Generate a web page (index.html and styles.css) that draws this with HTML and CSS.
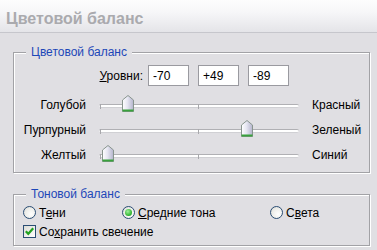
FILE: index.html
```html
<!doctype html>
<html>
<head>
    <meta charset="utf-8">
    <title>Цветовой баланс</title>
    <link rel="stylesheet" href="styles.css">
</head>
<body>
    <div class="dialog">
        <header class="titlebar">Цветовой баланс</header>

        <div class="content">
            <section class="group balance">
                <span class="legend">Цветовой баланс</span>

                <div class="levels">
                    <label><u>У</u>ровни:</label>
                    <input type="text" value="-70">
                    <input type="text" value="+49">
                    <input type="text" value="-89">
                </div>

                <div class="sliders">
                    <div class="slider-row">
                        <span class="left">Голубой</span>
                        <div class="track"><i class="tick t0"></i><i class="tick t50"></i><span class="thumb" style="left: 23px"></span></div>
                        <span class="right">Красный</span>
                    </div>
                    <div class="slider-row">
                        <span class="left">Пурпурный</span>
                        <div class="track"><i class="tick t0"></i><i class="tick t50"></i><span class="thumb" style="left: 142px"></span></div>
                        <span class="right">Зеленый</span>
                    </div>
                    <div class="slider-row">
                        <span class="left">Желтый</span>
                        <div class="track"><i class="tick t0"></i><i class="tick t50"></i><span class="thumb" style="left: 3px"></span></div>
                        <span class="right">Синий</span>
                    </div>
                </div>
            </section>

            <section class="group tone">
                <span class="legend">Тоновой баланс</span>
                <div class="radios">
                    <label class="radio"><span class="dot"></span><span>Т<u>е</u>ни</span></label>
                    <label class="radio checked"><span class="dot"></span><span><u>С</u>редние тона</span></label>
                    <label class="radio"><span class="dot"></span><span>С<u>в</u>ета</span></label>
                </div>
                <label class="check"><span class="box"><svg width="11" height="11" viewBox="0 0 11 11"><path d="M1.8 5.2 L4.3 7.8 L9.2 2.3" fill="none" stroke="#21a121" stroke-width="2.2"/></svg></span><span>Со<u>х</u>ранить свечение</span></label>
            </section>
        </div>
    </div>
</body>
</html>
```

FILE: styles.css
```css
body {
    margin: 0;
    background: #e0dfe3;
    font-family: "Liberation Sans", Arial, sans-serif;
    font-size: 12px;
    color: #000;
}

.dialog {
    width: 377px;
    height: 250px;
    overflow: hidden;
}

.titlebar {
    height: 33px;
    box-sizing: border-box;
    padding: 10px 0 0 6px;
    background: linear-gradient(#fdfdfd, #f6f6f8 40%, #e4e4e8);
    border-bottom: 1px solid #c6c6cc;
    font-family: "Liberation Sans", Arial, sans-serif;
    font-weight: bold;
    font-size: 16px;
    color: #aaaaae;
}

.content {
    padding: 19px 7px 0 13px;
}

.group {
    position: relative;
    box-sizing: border-box;
    border: 1px solid #a2a2a6;
    box-shadow: 1px 1px 0 #fff, inset 1px 1px 0 #fff;
}

.legend {
    position: absolute;
    top: -8px;
    left: 12px;
    padding: 0 5px;
    line-height: 14px;
    background: #e0dfe3;
    color: #1d47b8;
}

.balance {
    height: 121px;
}

.levels {
    display: flex;
    align-items: center;
    gap: 9px;
    margin-top: 12px;
    padding-left: 79px;
}

.levels label {
    width: 50px;
    margin-right: -4px;
    text-align: right;
}

.levels input {
    width: 41px;
    height: 21px;
    box-sizing: border-box;
    border: 1px solid #9a9aa0;
    font: inherit;
    padding: 0 0 0 4px;
    margin: 0;
    background: #fff;
}

.sliders {
    margin-top: 6px;
}

.slider-row {
    display: grid;
    grid-template-columns: 72px 200px auto;
    column-gap: 13px;
    align-items: center;
    height: 25px;
}

.slider-row .left {
    text-align: right;
}

.track {
    position: relative;
    height: 2px;
    margin-top: 3px;
    border-top: 1px solid #b0b0b4;
    border-bottom: 1px solid #d0d0d4;
    background: #fff;
    border-radius: 2px;
}

.tick {
    position: absolute;
    top: -1px;
    width: 1px;
    height: 5px;
    background: #a8a8ac;
}

.tick.t0 {
    left: 1px;
}

.tick.t50 {
    left: 99px;
}

.thumb {
    position: absolute;
    top: -10px;
    width: 12px;
    height: 17px;
    background: url("data:image/svg+xml,%3Csvg xmlns='http://www.w3.org/2000/svg' width='12' height='17'%3E%3Cdefs%3E%3ClinearGradient id='g' x1='0' x2='1'%3E%3Cstop offset='0' stop-color='%23ffffff'/%3E%3Cstop offset='0.45' stop-color='%23e6e6f2'/%3E%3Cstop offset='1' stop-color='%23b4b4cc'/%3E%3C/linearGradient%3E%3C/defs%3E%3Cpath d='M6 0.5 L11.5 5 L11.5 16.5 L0.5 16.5 L0.5 5 Z' fill='url(%23g)' stroke='%2388948e'/%3E%3Crect x='0.5' y='14.5' width='11' height='2' fill='%2339a13c'/%3E%3C/svg%3E") no-repeat;
}

.tone {
    margin-top: 21px;
    height: 52px;
}

.radios {
    display: flex;
    align-items: center;
    height: 17px;
    margin-top: 9px;
    padding-left: 9px;
}

.radio {
    display: flex;
    align-items: center;
    gap: 3px;
}

.radio:nth-child(1) {
    width: 99px;
}

.radio:nth-child(2) {
    width: 148px;
}

.dot {
    width: 13px;
    height: 13px;
    box-sizing: border-box;
    border-radius: 50%;
    border: 1px solid #2a4d74;
    background: radial-gradient(circle at 65% 65%, #fff, #ecece8 60%, #d0d0cc);
    display: flex;
    align-items: center;
    justify-content: center;
}

.radio.checked .dot::after {
    content: "";
    width: 7px;
    height: 7px;
    border-radius: 50%;
    background: radial-gradient(circle at 40% 35%, #9ef09a, #2cb12c 70%, #1c8a1c);
}

.check {
    display: flex;
    align-items: center;
    gap: 3px;
    padding-left: 9px;
    height: 17px;
    margin-top: 2px;
}

.box {
    width: 13px;
    height: 13px;
    box-sizing: border-box;
    border: 1px solid #2a4d74;
    background: linear-gradient(135deg, #dcdcd6, #fff);
    display: flex;
    align-items: center;
    justify-content: center;
}
```
